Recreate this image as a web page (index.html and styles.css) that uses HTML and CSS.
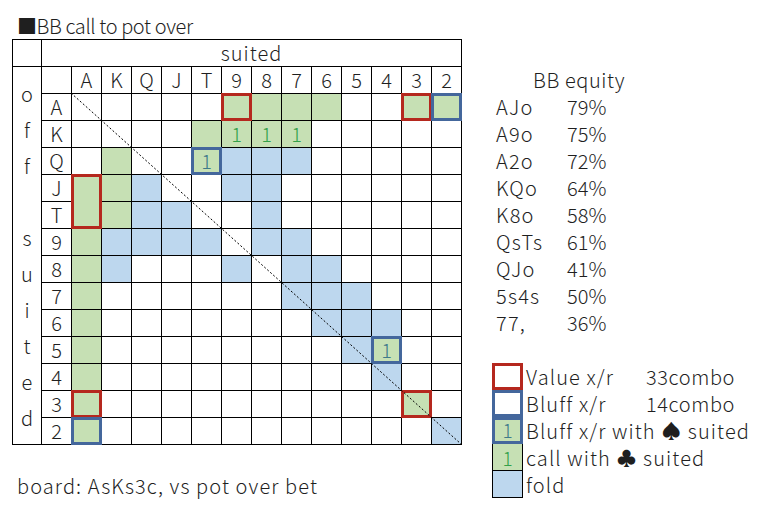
FILE: index.html
```html
<!DOCTYPE html>
<html lang="en">
<head>
<meta charset="utf-8">
<title>BB call to pot over</title>
<link rel="stylesheet" href="styles.css">
</head>
<body>
<div class="sheet">
  <div class="left">
    <h1 class="title">■BB call to pot over</h1>
    <div class="chart">
      <div class="corner"></div>
      <div class="suited">suited</div>
      <div class="vert"><span>o</span><span>f</span><span>f</span><span></span><span>s</span><span>u</span><span>i</span><span>t</span><span>e</span><span>d</span></div>
      <div></div><div>A</div><div>K</div><div>Q</div><div>J</div><div>T</div><div>9</div><div>8</div><div>7</div><div>6</div><div>5</div><div>4</div><div>3</div><div>2</div>

      <div>A</div><div></div><div></div><div></div><div></div><div></div><div class="g r"></div><div class="g"></div><div class="g"></div><div class="g"></div><div></div><div></div><div class="g r"></div><div class="g u"></div>

      <div>K</div><div></div><div></div><div></div><div></div><div class="g"></div><div class="g one">1</div><div class="g one">1</div><div class="g one">1</div><div></div><div></div><div></div><div></div><div></div>

      <div>Q</div><div></div><div class="g"></div><div></div><div></div><div class="g u onet">1</div><div class="b"></div><div class="b"></div><div class="b"></div><div></div><div></div><div></div><div></div><div></div>

      <div>J</div><div class="g r tall"></div><div class="g"></div><div class="b"></div><div></div><div></div><div class="b"></div><div class="b"></div><div></div><div></div><div></div><div></div><div></div><div></div>

      <div>T</div><div class="g"></div><div class="b"></div><div class="b"></div><div></div><div></div><div class="b"></div><div></div><div></div><div></div><div></div><div></div><div></div>

      <div>9</div><div class="g"></div><div class="b"></div><div class="b"></div><div class="b"></div><div class="b"></div><div></div><div class="b"></div><div class="b"></div><div></div><div></div><div></div><div></div><div></div>

      <div>8</div><div class="g"></div><div class="b"></div><div></div><div></div><div></div><div class="b"></div><div></div><div class="b"></div><div class="b"></div><div></div><div></div><div></div><div></div>

      <div>7</div><div class="g"></div><div></div><div></div><div></div><div></div><div></div><div></div><div class="b"></div><div class="b"></div><div class="b"></div><div></div><div></div><div></div>

      <div>6</div><div class="g"></div><div></div><div></div><div></div><div></div><div></div><div></div><div></div><div class="b"></div><div class="b"></div><div class="b"></div><div></div><div></div>

      <div>5</div><div class="g"></div><div></div><div></div><div></div><div></div><div></div><div></div><div></div><div></div><div class="b"></div><div class="g u onet">1</div><div></div><div></div>

      <div>4</div><div class="g"></div><div></div><div></div><div></div><div></div><div></div><div></div><div></div><div></div><div></div><div class="b"></div><div></div><div></div>

      <div>3</div><div class="g r"></div><div></div><div></div><div></div><div></div><div></div><div></div><div></div><div></div><div></div><div></div><div class="g r"></div><div></div>

      <div>2</div><div class="g u"></div><div></div><div></div><div></div><div></div><div></div><div></div><div></div><div></div><div></div><div></div><div></div><div class="b"></div>

      <svg class="diag" viewBox="0 0 390 351" width="390" height="351" aria-hidden="true"><line x1="0" y1="0" x2="390" y2="351" stroke="#000" stroke-width="1" stroke-dasharray="2 2"/></svg>
    </div>
    <p class="board">board: AsKs3c, vs pot over bet</p>
  </div>

  <div class="right">
    <div class="equity">
      <div class="eq-head">BB equity</div>
      <div class="hand">AJo</div><div class="pct">79%</div>
      <div class="hand">A9o</div><div class="pct">75%</div>
      <div class="hand">A2o</div><div class="pct">72%</div>
      <div class="hand">KQo</div><div class="pct">64%</div>
      <div class="hand">K8o</div><div class="pct">58%</div>
      <div class="hand">QsTs</div><div class="pct">61%</div>
      <div class="hand">QJo</div><div class="pct">41%</div>
      <div class="hand">5s4s</div><div class="pct">50%</div>
      <div class="hand">77,</div><div class="pct">36%</div>
    </div>
    <div class="legend">
      <div class="sw sw-red"></div><div class="lt">Value x/r</div><div class="lc">33combo</div>
      <div class="sw sw-blue"></div><div class="lt">Bluff x/r</div><div class="lc">14combo</div>
      <div class="sw sw-bluff">1</div><div class="lt wide">Bluff x/r with ♠ suited</div>
      <div class="sw sw-call">1</div><div class="lt wide">call with ♣ suited</div>
      <div class="sw sw-fold"></div><div class="lt wide">fold</div>
    </div>
  </div>
</div>
</body>
</html>
```

FILE: styles.css
```css
* { box-sizing: border-box; }

body {
  margin: 0;
  background: #fff;
  color: #1f1f1f;
  font-family: "Noto Sans CJK JP", "Noto Sans", sans-serif;
  font-size: 20px;
  font-weight: 300;
}

.sheet {
  display: flex;
  align-items: flex-start;
  gap: 30px;
  padding: 12px 0 0 12px;
}

.title {
  margin: 0;
  height: 27px;
  padding-left: 5px;
  font-size: 20px;
  font-weight: inherit;
  line-height: 27px;
  letter-spacing: -0.4px;
  white-space: nowrap;
}

.chart {
  position: relative;
  display: grid;
  grid-template-columns: 28px 29px repeat(13, 29px);
  grid-auto-rows: 26px;
  gap: 1px;
  width: max-content;
  background: #000;
  border: 1px solid #000;
}

.chart > div {
  display: flex;
  align-items: center;
  justify-content: center;
  background: #fff;
  line-height: 1;
}

.chart > .suited {
  grid-column: span 14;
  letter-spacing: 1px;
}

.chart > .vert {
  grid-row: span 14;
  flex-direction: column;
}

.vert span {
  display: block;
  height: 36px;
  line-height: 36px;
  text-align: center;
}

.chart > .g { background: #c6e0b4; }
.chart > .b { background: #bdd7ee; }
.chart > .tall { grid-row: span 2; }

.r {
  outline: 3px solid #b5281e;
  outline-offset: -2px;
}

.u {
  outline: 3px solid #44679c;
  outline-offset: -2px;
}

.one { color: #33a04a; }
.onet { color: #3e7a8a; }

.diag {
  position: absolute;
  left: 58px;
  top: 53px;
  pointer-events: none;
}

.board {
  margin: 27px 0 0;
  padding-left: 5px;
  line-height: 27px;
  letter-spacing: 1.1px;
  white-space: nowrap;
}

.right {
  padding-top: 54px;
}

.equity {
  display: grid;
  grid-template-columns: 75px auto;
  grid-auto-rows: 27px;
  line-height: 27px;
}

.eq-head {
  grid-column: span 2;
  padding-left: 41px;
  letter-spacing: 0.6px;
}

.hand {
  padding-left: 4px;
  letter-spacing: 1.2px;
}

.legend {
  margin-top: 27px;
  display: grid;
  grid-template-columns: 31px 120px auto;
  grid-auto-rows: 27px;
  line-height: 27px;
}

.lt {
  padding-left: 3px;
  letter-spacing: 1.1px;
  white-space: nowrap;
}

.lt.wide { grid-column: span 2; }

.lc {
  padding-left: 3px;
  letter-spacing: 0.6px;
  white-space: nowrap;
}

.sw {
  text-align: center;
  font-size: 19px;
}

.sw-red { border: 3px solid #b5281e; }
.sw-blue { border: 3px solid #44679c; }

.sw-bluff {
  border: 3px solid #44679c;
  background: #c6e0b4;
  color: #3e7a8a;
  line-height: 20px;
}

.sw-call {
  border: 1px solid #000;
  border-top: 0;
  background: #c6e0b4;
  color: #33a04a;
  line-height: 28px;
}

.sw-fold {
  border: 1px solid #000;
  border-top: 0;
  background: #bdd7ee;
}
```
